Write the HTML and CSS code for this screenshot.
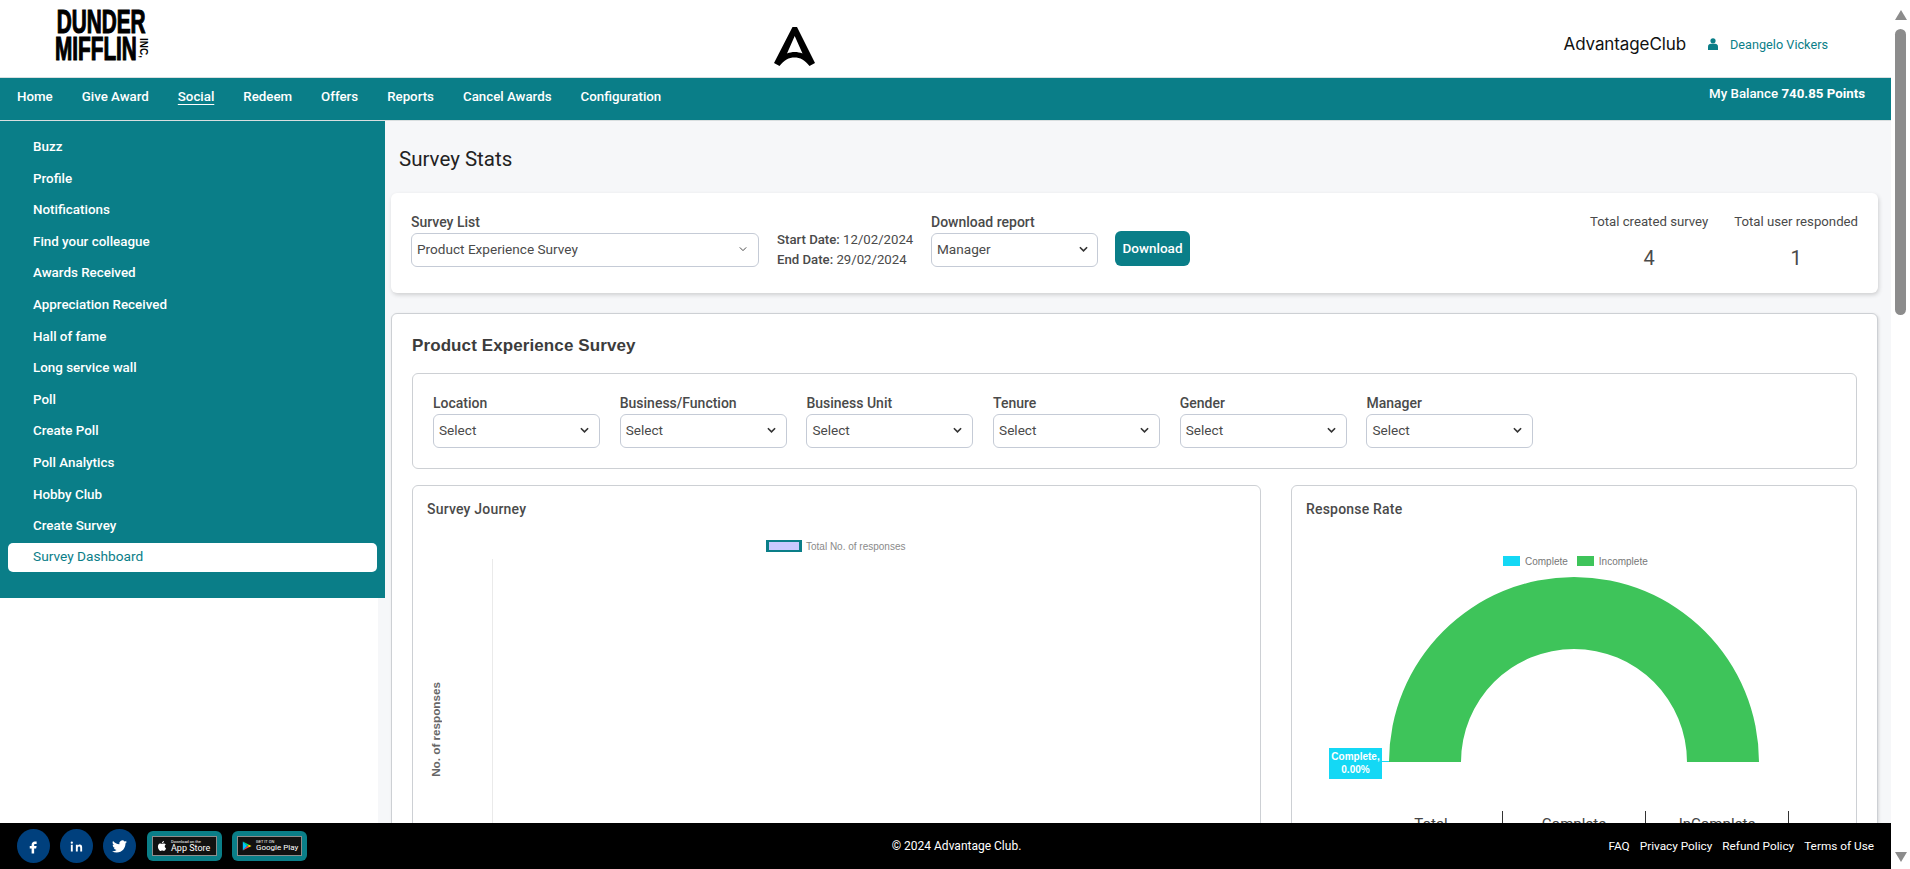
FILE: index.html
```html
<!DOCTYPE html>
<html lang="en">

<head>
    <meta charset="UTF-8">
    <meta name="viewport" content="width=device-width, initial-scale=1.0">
    <title>Survey Stats</title>
    <link rel="stylesheet" href="styles.css">
</head>

<body>
    <div class="page">
        <header class="topbar">
            <div class="company-logo">
                <div class="company-name">
                    <span class="company-line">DUNDER</span>
                    <span class="company-line">MIFFLIN</span>
                </div>
                <span class="company-inc">INC,</span>
            </div>
            <svg class="brand-mark" viewBox="0 0 41 39">
                <path d="M18.500 0 H23 L41 36 L35.500 39 C31 33 26 30.500 20.500 30.500 C15 30.500 10 33 5.500 39 L0 36 Z M20.700 9 L13 26.500 C15.500 25.500 18 25 20.700 25 C23.500 25 26 25.500 28.500 26.500 Z" fill="#000" fill-rule="evenodd" />
            </svg>
            <div class="topbar-right">
                <span class="brand-name">AdvantageClub</span>
                <a class="user-link" href="#">
                    <svg class="user-icon" viewBox="0 0 10 12">
                        <circle cx="5" cy="2.800" r="2.600" fill="#0a7e88" />
                        <path d="M0 12 V8.500 C0 6.800 1.500 5.800 2.800 5.800 H7.200 C8.500 5.800 10 6.800 10 8.500 V12 Z" fill="#0a7e88" />
                    </svg>
                    Deangelo Vickers
                </a>
            </div>
        </header>

        <nav class="navbar">
            <div class="nav-links">
                <a href="#">Home</a>
                <a href="#">Give Award</a>
                <a href="#" class="current">Social</a>
                <a href="#">Redeem</a>
                <a href="#">Offers</a>
                <a href="#">Reports</a>
                <a href="#">Cancel Awards</a>
                <a href="#">Configuration</a>
            </div>
            <div class="balance">My Balance <b>740.85 Points</b></div>
        </nav>

        <div class="content">
            <aside class="side-col">
                <ul class="sidebar">
                    <li><a href="#">Buzz</a></li>
                    <li><a href="#">Profile</a></li>
                    <li><a href="#">Notifications</a></li>
                    <li><a href="#">Find your colleague</a></li>
                    <li><a href="#">Awards Received</a></li>
                    <li><a href="#">Appreciation Received</a></li>
                    <li><a href="#">Hall of fame</a></li>
                    <li><a href="#">Long service wall</a></li>
                    <li><a href="#">Poll</a></li>
                    <li><a href="#">Create Poll</a></li>
                    <li><a href="#">Poll Analytics</a></li>
                    <li><a href="#">Hobby Club</a></li>
                    <li><a href="#">Create Survey</a></li>
                    <li class="active"><a href="#">Survey Dashboard</a></li>
                </ul>
            </aside>

            <main class="main">
                <h1 class="page-title">Survey Stats</h1>

                <section class="stats-card">
                    <div class="field field-survey">
                        <label>Survey List</label>
                        <div class="select">
                            <span>Product Experience Survey</span>
                            <svg class="chevron chevron-thin" viewBox="0 0 10 6"><path d="M1 1 L5 5 L9 1" /></svg>
                        </div>
                    </div>
                    <div class="dates">
                        <div><b>Start Date:</b> 12/02/2024</div>
                        <div><b>End Date:</b> 29/02/2024</div>
                    </div>
                    <div class="field field-report">
                        <label>Download report</label>
                        <div class="select">
                            <span>Manager</span>
                            <svg class="chevron" viewBox="0 0 10 6"><path d="M1 1 L5 5 L9 1" /></svg>
                        </div>
                    </div>
                    <button class="download-btn">Download</button>
                    <div class="totals">
                        <div class="total">
                            <div class="total-label">Total created survey</div>
                            <div class="total-value">4</div>
                        </div>
                        <div class="total">
                            <div class="total-label">Total user responded</div>
                            <div class="total-value">1</div>
                        </div>
                    </div>
                </section>

                <section class="survey-panel">
                    <h2 class="survey-name">Product Experience Survey</h2>

                    <div class="filters">
                        <div class="field filter">
                            <label>Location</label>
                            <div class="select"><span>Select</span><svg class="chevron" viewBox="0 0 10 6"><path d="M1 1 L5 5 L9 1" /></svg></div>
                        </div>
                        <div class="field filter">
                            <label>Business/Function</label>
                            <div class="select"><span>Select</span><svg class="chevron" viewBox="0 0 10 6"><path d="M1 1 L5 5 L9 1" /></svg></div>
                        </div>
                        <div class="field filter">
                            <label>Business Unit</label>
                            <div class="select"><span>Select</span><svg class="chevron" viewBox="0 0 10 6"><path d="M1 1 L5 5 L9 1" /></svg></div>
                        </div>
                        <div class="field filter">
                            <label>Tenure</label>
                            <div class="select"><span>Select</span><svg class="chevron" viewBox="0 0 10 6"><path d="M1 1 L5 5 L9 1" /></svg></div>
                        </div>
                        <div class="field filter">
                            <label>Gender</label>
                            <div class="select"><span>Select</span><svg class="chevron" viewBox="0 0 10 6"><path d="M1 1 L5 5 L9 1" /></svg></div>
                        </div>
                        <div class="field filter">
                            <label>Manager</label>
                            <div class="select"><span>Select</span><svg class="chevron" viewBox="0 0 10 6"><path d="M1 1 L5 5 L9 1" /></svg></div>
                        </div>
                    </div>

                    <div class="charts">
                        <div class="chart-box journey">
                            <h3 class="chart-title">Survey Journey</h3>
                            <div class="journey-legend">
                                <span class="journey-swatch"></span>
                                <span>Total No. of responses</span>
                            </div>
                            <div class="journey-plot">
                                <div class="y-label-col"><span class="y-label">No. of responses</span></div>
                                <div class="plot-area"></div>
                            </div>
                        </div>

                        <div class="chart-box rate">
                            <h3 class="chart-title">Response Rate</h3>
                            <div class="rate-legend">
                                <span class="swatch swatch-cyan"></span><span>Complete</span>
                                <span class="swatch swatch-green"></span><span>Incomplete</span>
                            </div>
                            <div class="gauge">
                                <svg class="gauge-svg" viewBox="0 0 370 186">
                                    <path d="M0 186 A185 185 0 0 1 370 186 H298 A113 113 0 0 0 72 186 Z" fill="#3ec45a" />
                                </svg>
                                <div class="gauge-tip">Complete,<br>0.00%</div>
                                <span class="gauge-tip-line"></span>
                            </div>
                            <div class="rate-table">
                                <div class="rate-cell">Total</div>
                                <div class="rate-cell">Complete</div>
                                <div class="rate-cell">InComplete</div>
                            </div>
                        </div>
                    </div>
                </section>
            </main>
        </div>
    </div>

    <div class="scrollbar">
        <span class="scroll-up"></span>
        <span class="scroll-thumb"></span>
        <span class="scroll-down"></span>
    </div>

    <footer class="footer">
        <div class="footer-left">
            <a class="social" href="#"><svg viewBox="0 0 24 24"><path d="M14 8h3V4h-3c-2.800 0-5 2.200-5 5v2H6v4h3v8h4v-8h3.200l.8-4h-4V9c0-.6.4-1 1-1z" /></svg></a>
            <a class="social" href="#"><svg viewBox="0 0 24 24"><path d="M6 9H3v11h3zM4.500 4a1.800 1.800 0 100 3.600 1.800 1.800 0 000-3.600zM21 20h-3v-5.500c0-1.600-.6-2.600-1.900-2.600-1.400 0-2.100 1-2.100 2.600V20h-3V9h3v1.500c.6-1 1.800-1.800 3.300-1.800 2.600 0 3.700 1.800 3.700 4.600z" /></svg></a>
            <a class="social" href="#"><svg viewBox="0 0 24 24"><path d="M23.953 4.570a10 10 0 01-2.825.775 4.958 4.958 0 002.163-2.723c-.951.555-2.005.959-3.127 1.184a4.920 4.920 0 00-8.384 4.482C7.690 8.095 4.067 6.130 1.640 3.162a4.822 4.822 0 00-.666 2.475c0 1.710.870 3.213 2.188 4.096a4.904 4.904 0 01-2.228-.616v.060a4.923 4.923 0 003.946 4.827 4.996 4.996 0 01-2.212.085 4.936 4.936 0 004.604 3.417 9.867 9.867 0 01-6.102 2.105c-.390 0-.779-.023-1.170-.067a13.995 13.995 0 007.557 2.209c9.053 0 13.998-7.496 13.998-13.985 0-.210 0-.420-.015-.630A9.935 9.935 0 0024 4.590z" /></svg></a>
            <a class="store" href="#">
                <div class="store-inner">
                    <svg class="store-icon" viewBox="0 0 24 24"><path fill="#fff" d="M12.152 6.896c-.948 0-2.415-1.078-3.960-1.040-2.040.027-3.910 1.183-4.961 3.014-2.117 3.675-.546 9.103 1.519 12.090 1.013 1.454 2.208 3.090 3.792 3.039 1.520-.065 2.090-.987 3.935-.987 1.831 0 2.350.987 3.960.948 1.637-.026 2.676-1.480 3.676-2.948 1.156-1.688 1.636-3.325 1.662-3.415-.039-.013-3.182-1.221-3.220-4.857-.026-3.040 2.480-4.494 2.597-4.559-1.429-2.090-3.623-2.324-4.390-2.376-2-.156-3.675 1.090-4.610 1.090zM15.530 3.830c.843-1.012 1.400-2.427 1.245-3.830-1.207.052-2.662.805-3.532 1.818-.780.896-1.454 2.338-1.273 3.714 1.338.104 2.715-.688 3.559-1.701" /></svg>
                    <div class="store-text">
                        <span class="store-small">Download on the</span>
                        <span class="store-big">App Store</span>
                    </div>
                </div>
            </a>
            <a class="store" href="#">
                <div class="store-inner">
                    <svg class="store-icon" viewBox="0 0 24 24">
                        <path fill="#00c3ff" d="M2 1 L13 12 L2 23 Z" />
                        <path fill="#00e676" d="M2 1 L17 9 L13 12 Z" />
                        <path fill="#ff3a44" d="M2 23 L17 15 L13 12 Z" />
                        <path fill="#ffd500" d="M17 9 L23 12 L17 15 L13 12 Z" />
                    </svg>
                    <div class="store-text">
                        <span class="store-small">GET IT ON</span>
                        <span class="store-big store-big-play">Google Play</span>
                    </div>
                </div>
            </a>
        </div>
        <div class="copyright">© 2024 Advantage Club.</div>
        <div class="footer-links">
            <a href="#">FAQ</a>
            <a href="#">Privacy Policy</a>
            <a href="#">Refund Policy</a>
            <a href="#">Terms of Use</a>
        </div>
    </footer>
</body>

</html>
```

FILE: styles.css
```css
* {
    box-sizing: border-box;
}

html,
body {
    margin: 0;
    height: 100%;
    overflow: hidden;
}

body {
    font-family: Roboto, "Liberation Sans", Arial, sans-serif;
    font-size: 14px;
    color: #4a4a4a;
    background-color: #ffffff;
}

a {
    text-decoration: none;
    color: inherit;
}

.page {
    width: 1891px;
    height: 100vh;
    overflow: hidden;
    display: flex;
    flex-direction: column;
}

/* top bar */
.topbar {
    height: 78px;
    flex-shrink: 0;
    display: flex;
    align-items: flex-start;
    position: relative;
    background-color: #ffffff;
    border-bottom: 1px solid #d9dfe0;
}

.company-logo {
    margin: 8px 0 0 55px;
    width: 96px;
    height: 58px;
    position: relative;
}

.company-name {
    display: flex;
    flex-direction: column;
    font-family: "Liberation Sans", Arial, sans-serif;
    font-weight: 700;
    color: #000000;
    font-size: 34px;
    line-height: 27px;
    -webkit-text-stroke: 1.2px #000000;
    transform: scaleX(0.61);
    transform-origin: left top;
    white-space: nowrap;
}

.company-line:first-child {
    margin-left: 3px;
}

.company-inc {
    position: absolute;
    left: 83px;
    top: 30px;
    font-family: "Liberation Sans", Arial, sans-serif;
    font-weight: 700;
    font-size: 10px;
    line-height: 11px;
    color: #000000;
    writing-mode: vertical-rl;
}

.brand-mark {
    position: absolute;
    left: 774px;
    top: 27px;
    width: 41px;
    height: 39px;
}

.topbar-right {
    margin-left: auto;
    margin-right: 63px;
    height: 88px;
    display: flex;
    align-items: center;
}

.brand-name {
    font-family: Inter, "Liberation Sans", sans-serif;
    font-size: 17px;
    color: #111111;
    margin-right: 22px;
    letter-spacing: -0.1px;
}

.user-link {
    display: flex;
    align-items: center;
    gap: 12px;
    color: #0a7e88;
    font-size: 12.700px;
}

.user-icon {
    width: 10px;
    height: 12px;
}

/* nav */
.navbar {
    height: 43px;
    flex-shrink: 0;
    background-color: #0a7e88;
    border-bottom: 1px solid #d9dfe0;
    display: flex;
    justify-content: space-between;
    color: #ffffff;
    font-size: 13.300px;
    font-weight: 500;
    padding: 0 26px 0 17px;
}

.nav-links {
    display: flex;
    gap: 29px;
    align-items: center;
    padding-bottom: 5px;
}

.nav-links a.current {
    text-decoration: underline;
    text-underline-offset: 3px;
}

.balance {
    padding-top: 8px;
}

.balance b {
    font-weight: 700;
}

/* layout */
.content {
    flex: 1;
    min-height: 0;
    display: flex;
    background-color: #f6f7f9;
}

.side-col {
    width: 378px;
    flex-shrink: 0;
    background-color: #ffffff;
}

.sidebar {
    list-style: none;
    margin: 0;
    width: 385px;
    padding: 11px 8px 26px;
    display: flex;
    flex-direction: column;
    gap: 2.6px;
    background-color: #0a7e88;
}

.sidebar a {
    display: block;
    height: 29px;
    line-height: 29px;
    padding-left: 25px;
    color: #ffffff;
    font-size: 13.400px;
    font-weight: 500;
    border-radius: 5px;
}

.sidebar .active a {
    background-color: #ffffff;
    color: #0a7e88;
    font-size: 13.700px;
    font-weight: 400;
    line-height: 27px;
}

.main {
    flex: 1;
    min-width: 0;
    padding: 0 13px 0 13px;
}

.page-title {
    margin: 26px 0 0 8px;
    font-size: 20.500px;
    font-weight: 400;
    line-height: 24px;
    color: #222222;
    height: 46px;
}

/* stats card */
.stats-card {
    height: 100px;
    background-color: #ffffff;
    border-radius: 6px;
    box-shadow: 1px 2px 4px rgba(0, 0, 0, 0.16);
    display: flex;
    padding: 21px 20px 0;
    align-items: flex-start;
}

.field label {
    display: block;
    font-weight: 500;
    line-height: 16px;
    height: 19px;
    color: #4a4a4a;
}

.select {
    height: 34px;
    border: 1px solid #c5cbd6;
    border-radius: 6px;
    background-color: #ffffff;
    display: flex;
    align-items: center;
    justify-content: space-between;
    padding: 0 9px 2px 5px;
    color: #4a4a4a;
    font-size: 13.600px;
}

.chevron {
    width: 9px;
    height: 6px;
    fill: none;
    stroke: #333333;
    stroke-width: 1.800;
}

.chevron-thin {
    width: 8px;
    stroke-width: 1.100;
    margin-right: 2px;
}

.field-survey {
    width: 348px;
}

.dates {
    margin: 16px 0 0 18px;
    width: 154px;
    line-height: 20px;
    font-size: 13.200px;
    white-space: nowrap;
}

.dates b {
    font-weight: 500;
}

.field-report {
    width: 167px;
}

.download-btn {
    margin: 17px 0 0 17px;
    width: 75px;
    height: 35px;
    padding-bottom: 3px;
    background-color: #0a7e88;
    color: #ffffff;
    border: none;
    border-radius: 6px;
    font-family: inherit;
    font-size: 13.500px;
    font-weight: 500;
}

.totals {
    margin-left: auto;
    display: flex;
    gap: 26px;
}

.total {
    text-align: center;
}

.total-label {
    font-size: 13.200px;
    line-height: 16px;
}

.total-value {
    font-size: 20px;
    line-height: 24px;
    margin-top: 16px;
}

/* survey panel */
.survey-panel {
    margin-top: 20px;
    background-color: #ffffff;
    border: 1px solid #cdd0d4;
    border-radius: 6px;
    box-shadow: 1px 1px 3px rgba(0, 0, 0, 0.12);
    padding: 22px 20px 40px;
}

.survey-name {
    margin: 0;
    font-family: "Liberation Sans", Arial, sans-serif;
    font-size: 17px;
    font-weight: 700;
    letter-spacing: 0.1px;
    line-height: 20px;
    color: #3c3c3c;
}

.filters {
    margin-top: 17px;
    height: 96px;
    border: 1px solid #cdd0d4;
    border-radius: 6px;
    padding: 21px 20px 0;
    display: flex;
    gap: 19.700px;
}

.filter {
    width: 167px;
}

.filter .select {
    height: 34px;
    padding: 0 10px 2px 5px;
}

.charts {
    margin-top: 16px;
    display: flex;
    gap: 30px;
}

.chart-box {
    border: 1px solid #cdd0d4;
    border-radius: 6px;
    height: 420px;
    background-color: #ffffff;
}

.chart-title {
    margin: 0;
    font-size: 14px;
    font-weight: 500;
    line-height: 16px;
    letter-spacing: 0.2px;
    color: #4a4a4a;
    padding: 15px 0 0 14px;
}

/* journey chart */
.journey {
    width: 849px;
}

.journey-legend {
    margin: 23px 0 0 353px;
    display: flex;
    align-items: center;
    gap: 4px;
    font-family: "Liberation Sans", Arial, sans-serif;
    font-size: 10px;
    color: #8a8a8a;
    height: 12px;
}

.journey-swatch {
    width: 36px;
    height: 12px;
    background-color: #c9c9ff;
    border-style: solid;
    border-color: #0a7e88;
    border-width: 2px 3px;
}

.journey-plot {
    margin-top: 7px;
    display: flex;
    height: 340px;
}

.y-label-col {
    width: 79px;
    padding-left: 16px;
    padding-top: 123px;
}

.y-label {
    writing-mode: vertical-rl;
    transform: rotate(180deg);
    font-family: "Liberation Sans", Arial, sans-serif;
    font-size: 11.700px;
    font-weight: 700;
    color: #666666;
    display: block;
    white-space: nowrap;
}

.plot-area {
    flex: 1;
    border-left: 1px solid #eaeaea;
}

/* response rate */
.rate {
    flex: 1;
    min-width: 0;
}

.rate-legend {
    margin: 38px 0 0 211px;
    height: 12px;
    display: flex;
    align-items: center;
    gap: 5px;
    font-family: "Liberation Sans", Arial, sans-serif;
    font-size: 10px;
    color: #777777;
}

.swatch {
    width: 17px;
    height: 10px;
}

.swatch-cyan {
    background-color: #14d8f5;
}

.swatch-green {
    background-color: #3ec45a;
    margin-left: 4px;
}

.gauge {
    position: relative;
    margin: 9px 0 0 97px;
    width: 370px;
    height: 186px;
}

.gauge-svg {
    display: block;
    width: 370px;
    height: 186px;
}

.gauge-tip {
    position: absolute;
    left: -60px;
    top: 172px;
    width: 53px;
    height: 31px;
    background-color: #14d8f5;
    color: #ffffff;
    font-family: "Liberation Sans", Arial, sans-serif;
    font-size: 10px;
    font-weight: 700;
    line-height: 13px;
    text-align: center;
    padding-top: 2px;
}

.gauge-tip-line {
    position: absolute;
    left: -7px;
    top: 185px;
    width: 7px;
    height: 1px;
    background-color: #14d8f5;
}

.rate-table {
    display: flex;
    margin: 49px 0 0 68px;
}

.rate-cell {
    width: 143px;
    height: 40px;
    text-align: center;
    border-right: 1px solid #333333;
    line-height: 22px;
    font-size: 15px;
    padding-top: 2px;
    color: #444444;
}

/* scrollbar */
.scrollbar {
    position: fixed;
    top: 0;
    right: 0;
    width: 19px;
    height: 100vh;
    background-color: #ffffff;
}

.scroll-up {
    position: absolute;
    left: 4px;
    top: 10px;
    border-left: 6px solid transparent;
    border-right: 6px solid transparent;
    border-bottom: 10px solid #8c8c8c;
}

.scroll-down {
    position: absolute;
    left: 4px;
    bottom: 7px;
    border-left: 6px solid transparent;
    border-right: 6px solid transparent;
    border-top: 10px solid #8c8c8c;
}

.scroll-thumb {
    position: absolute;
    left: 4px;
    top: 29px;
    width: 11px;
    height: 286px;
    border-radius: 6px;
    background-color: #8c8c8c;
}

/* footer */
.footer {
    position: fixed;
    left: 0;
    bottom: 0;
    width: 1891px;
    height: 46px;
    background-color: #000000;
    color: #ffffff;
    font-size: 11.800px;
    display: grid;
    grid-template-columns: 1fr auto 1fr;
    align-items: center;
    padding: 0 17px;
}

.footer-left {
    display: flex;
    align-items: center;
}

.social {
    width: 33px;
    height: 34px;
    border-radius: 50%;
    background-color: #00407d;
    display: flex;
    align-items: center;
    justify-content: center;
    margin-right: 10px;
}

.social:nth-child(3) {
    margin-right: 11px;
}

.social svg {
    width: 15px;
    height: 15px;
    fill: #ffffff;
}

.store {
    width: 75px;
    height: 30px;
    border-radius: 6px;
    background-color: #0a7e88;
    padding: 5px;
    margin-right: 10px;
}

.store-inner {
    height: 20px;
    background-color: #111111;
    border: 1px solid #8d8d8d;
    display: flex;
    align-items: center;
    gap: 4px;
    padding-left: 4px;
}

.store-icon {
    width: 10px;
    height: 12px;
    flex-shrink: 0;
}

.store-text {
    display: flex;
    flex-direction: column;
    line-height: 1;
    white-space: nowrap;
}

.store-small {
    font-size: 4px;
}

.store-big {
    font-size: 9px;
}

.store-big-play {
    font-size: 8px;
}

.copyright {
    font-size: 12px;
    margin-left: 22px;
}

.footer-links {
    display: flex;
    justify-content: flex-end;
    gap: 10px;
}
```
